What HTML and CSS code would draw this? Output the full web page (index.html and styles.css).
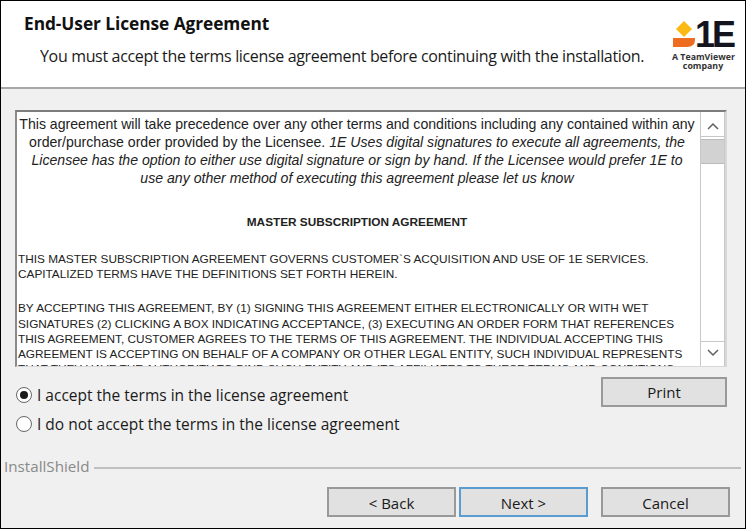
FILE: index.html
```html
<!DOCTYPE html>
<html>

<head>
    <title>End-User License Agreement</title>
    <link rel="stylesheet" href="styles.css">
</head>

<body>
    <div class="window">
        <div class="header">
            <div class="headerText">
                <div class="title">End-User License Agreement</div>
                <div class="subtitle">You must accept the terms license agreement before continuing with the installation.</div>
            </div>
            <div class="logo">
                <div class="logoMark">
                    <svg width="24" height="27" viewBox="0 0 24 27">
                        <path d="M12 0 L20 8 L12 16 L4 8 Z" fill="#fdb913"></path>
                        <path d="M1 17 H23 V19 Q23 26 15 26 H1 Z" fill="#ee6c22"></path>
                    </svg>
                    <span class="logoName">1E</span>
                </div>
                <div class="logoTag">A TeamViewer<br>company</div>
            </div>
        </div>

        <div class="content">
            <div class="licenseBox">
                <div class="licenseText">
                    <div class="intro">
                        <div>This agreement will take precedence over any other terms and conditions including any contained within any</div>
                        <div>order/purchase order provided by the Licensee. <i>1E Uses digital signatures to execute all agreements, the</i></div>
                        <div><i>Licensee has the option to either use digital signature or sign by hand. If the Licensee would prefer 1E to</i></div>
                        <div><i>use any other method of executing this agreement please let us know</i></div>
                    </div>
                    <div class="heading">MASTER SUBSCRIPTION AGREEMENT</div>
                    <div class="para">
                        <div>THIS MASTER SUBSCRIPTION AGREEMENT GOVERNS CUSTOMER`S ACQUISITION AND USE OF 1E SERVICES.</div>
                        <div>CAPITALIZED TERMS HAVE THE DEFINITIONS SET FORTH HEREIN.</div>
                    </div>
                    <div class="para">
                        <div>BY ACCEPTING THIS AGREEMENT, BY (1) SIGNING THIS AGREEMENT EITHER ELECTRONICALLY OR WITH WET</div>
                        <div>SIGNATURES (2) CLICKING A BOX INDICATING ACCEPTANCE, (3) EXECUTING AN ORDER FORM THAT REFERENCES</div>
                        <div>THIS AGREEMENT, CUSTOMER AGREES TO THE TERMS OF THIS AGREEMENT. THE INDIVIDUAL ACCEPTING THIS</div>
                        <div>AGREEMENT IS ACCEPTING ON BEHALF OF A COMPANY OR OTHER LEGAL ENTITY, SUCH INDIVIDUAL REPRESENTS</div>
                        <div>THAT THEY HAVE THE AUTHORITY TO BIND SUCH ENTITY AND ITS AFFILIATES TO THESE TERMS AND CONDITIONS</div>
                    </div>
                </div>
                <div class="scrollbar">
                    <div class="scrollBtn scrollUp">
                        <svg width="12" height="8" viewBox="0 0 12 8"><path d="M1 7 L6 2 L11 7" fill="none" stroke="#606060" stroke-width="1.5"></path></svg>
                    </div>
                    <div class="scrollThumb"></div>
                    <div class="scrollTrack"></div>
                    <div class="scrollBtn scrollDown">
                        <svg width="12" height="8" viewBox="0 0 12 8"><path d="M1 1 L6 6 L11 1" fill="none" stroke="#606060" stroke-width="1.5"></path></svg>
                    </div>
                </div>
            </div>

            <div class="options">
                <div class="radios">
                    <div class="radioRow"><span class="radio checked"></span>I accept the terms in the license agreement</div>
                    <div class="radioRow"><span class="radio"></span>I do not accept the terms in the license agreement</div>
                </div>
                <div class="button printBtn">Print</div>
            </div>
        </div>

        <div class="brand">
            <span class="brandName">InstallShield</span>
            <span class="brandLine"></span>
        </div>

        <div class="footer">
            <div class="button">&lt; Back</div>
            <div class="button default">Next &gt;</div>
            <div class="button cancelBtn">Cancel</div>
        </div>
    </div>
</body>

</html>
```

FILE: styles.css
```css
html,
body {
    margin: 0;
    padding: 0;
}

.window {
    width: 746px;
    height: 529px;
    box-sizing: border-box;
    border: 1px solid #000;
    background-color: #f0f0f0;
    font-family: "Open Sans", "Noto Sans", sans-serif;
    color: #1a1a1a;
    overflow: hidden;
}

.header {
    height: 86px;
    background-color: #fff;
    border-bottom: 2px solid #a8a8a8;
    display: flex;
    justify-content: space-between;
}

.headerText {
    padding: 12px 0 0 23px;
}

.title {
    font-size: 17.3px;
    line-height: 21px;
    font-weight: 700;
    letter-spacing: -0.05px;
    color: #111;
}

.subtitle {
    margin: 12px 0 0 16px;
    font-size: 16px;
    line-height: 21px;
    letter-spacing: -0.34px;
    white-space: nowrap;
}

.logo {
    width: 62px;
    margin: 20px 11px 0 0;
}

.logoMark {
    display: flex;
    height: 27px;
}

.logoName {
    font-family: "Liberation Sans", sans-serif;
    font-size: 36px;
    font-weight: 700;
    line-height: 27px;
    color: #14141e;
    letter-spacing: -3px;
    margin-left: -1px;
}

.logoTag {
    margin-top: 5px;
    font-size: 8.8px;
    line-height: 9px;
    font-weight: 700;
    text-align: center;
    color: #333;
    white-space: nowrap;
}

.content {
    padding: 21px 18px 0 14px;
}

.licenseBox {
    height: 257px;
    box-sizing: border-box;
    background-color: #fff;
    border-top: 2px solid #7d7d7d;
    border-left: 2px solid #8a8a8a;
    border-right: 2px solid #d8d8d8;
    border-bottom: 1px solid #d8d8d8;
    display: flex;
    overflow: hidden;
}

.licenseText {
    flex: 1;
    overflow: hidden;
    padding-right: 3px;
    font-family: "Liberation Sans", Arial, sans-serif;
    color: #222;
    white-space: nowrap;
}

.intro {
    padding-top: 3px;
    font-size: 14.1px;
    line-height: 18px;
    text-align: center;
}

.heading {
    margin-top: 28px;
    font-size: 11.8px;
    line-height: 14px;
    font-weight: 700;
    text-align: center;
}

.para {
    margin-top: 19px;
    padding-left: 1px;
    font-size: 11.8px;
    line-height: 15.2px;
}

.heading + .para {
    margin-top: 23px;
}

.scrollbar {
    width: 25px;
    flex-shrink: 0;
    border-left: 1px solid #c8c8c8;
    border-right: 1px solid #c8c8c8;
    box-sizing: border-box;
    display: flex;
    flex-direction: column;
}

.scrollBtn {
    height: 25px;
    box-sizing: border-box;
    display: flex;
    align-items: center;
    justify-content: center;
    background-color: #fff;
}

.scrollUp {
    border-bottom: 1px solid #c8c8c8;
    padding-top: 4px;
}

.scrollDown {
    border-top: 1px solid #c8c8c8;
    padding-bottom: 2px;
}

.scrollThumb {
    height: 25px;
    margin-top: 2px;
    background-color: #d2d2d2;
    border-top: 1px solid #bbb;
    border-bottom: 1px solid #bbb;
    box-sizing: border-box;
}

.scrollTrack {
    flex: 1;
}

.options {
    display: flex;
    justify-content: space-between;
    margin-top: 10px;
}

.radios {
    padding-top: 7px;
    margin-left: 1px;
}

.radioRow {
    display: flex;
    align-items: center;
    gap: 5px;
    height: 21px;
    margin-bottom: 8.5px;
    font-size: 15.5px;
    white-space: nowrap;
}

.radio {
    width: 16px;
    height: 16px;
    box-sizing: border-box;
    border: 1px solid #666;
    border-radius: 50%;
    background-color: #fff;
    display: flex;
    align-items: center;
    justify-content: center;
}

.radio.checked::after {
    content: "";
    width: 8px;
    height: 8px;
    border-radius: 50%;
    background-color: #1a1a1a;
}

.button {
    width: 129px;
    height: 30px;
    box-sizing: border-box;
    border: 2px solid #999;
    background-color: #e1e1e1;
    display: flex;
    align-items: center;
    justify-content: center;
    font-size: 15px;
    color: #1a1a1a;
}

.printBtn {
    width: 126px;
}

.brand {
    display: flex;
    align-items: center;
    gap: 5px;
    margin-top: 13px;
    padding: 0 4px 0 3px;
}

.brandName {
    font-size: 15.2px;
    line-height: 20px;
    color: #8a8a8a;
}

.brandLine {
    flex: 1;
    margin-top: 3px;
    border-top: 2px solid #c0c0c0;
}

.footer {
    display: flex;
    margin-top: 11px;
    padding-left: 326px;
}

.footer .button {
    padding-top: 1px;
}

.button.default {
    margin-left: 3px;
    border-color: #5a9bd0;
}

.cancelBtn {
    margin-left: 13px;
}
```
